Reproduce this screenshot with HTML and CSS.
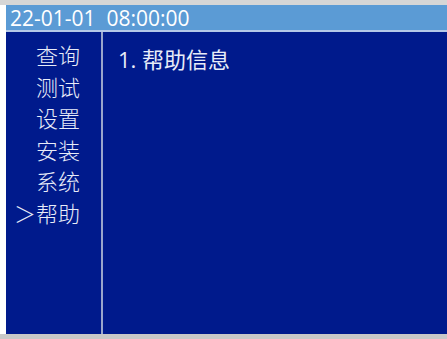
FILE: index.html
```html
<!DOCTYPE html>
<html lang="zh-CN">
<head>
  <meta charset="UTF-8">
  <meta name="viewport" content="width=device-width, initial-scale=1.0">
  <title>帮助</title>
  <link rel="stylesheet" href="styles.css">
</head>
<body>

  <div class="screen">
    <!-- 顶部时间栏 -->
    <div class="status-bar">22-01-01&nbsp;&nbsp;08:00:00</div>

    <div class="main">
      <!-- 左侧菜单 -->
      <ul class="menu">
        <li><span class="cursor"></span>查询</li>
        <li><span class="cursor"></span>测试</li>
        <li><span class="cursor"></span>设置</li>
        <li><span class="cursor"></span>安装</li>
        <li><span class="cursor"></span>系统</li>
        <li class="active"><span class="cursor">＞</span>帮助</li>
      </ul>

      <!-- 右侧内容 -->
      <div class="content">
        <p>1. 帮助信息</p>
      </div>
    </div>
  </div>

</body>
</html>
```

FILE: styles.css
```css
* {
  margin: 0;
  padding: 0;
  box-sizing: border-box;
}

body {
  background-color: #ffffff;
  font-family: "Open Sans", "Noto Sans CJK SC", sans-serif;
  width: 447px;
  height: 339px;
  overflow: hidden;
}

.screen {
  height: 339px;
  padding-left: 6px;
  border-top: 5px solid #d6d6d6;
  border-bottom: 5px solid #c8c8c8;
  display: flex;
  flex-direction: column;
}

.status-bar {
  height: 27px;
  background-color: #5b9bd5;
  color: #ffffff;
  font-size: 21px;
  line-height: 27px;
  padding-left: 4px;
  border-bottom: 2px solid #b4c8e8;
}

.main {
  flex: 1;
  display: flex;
  background-color: #001a8c;
}

.menu {
  list-style: none;
  width: 97px;
  border-right: 2px solid #9aa6cc;
  padding-top: 7px;
  font-family: "Noto Sans CJK SC", sans-serif;
  font-weight: 300;
  font-size: 22px;
  color: #e8ecf8;
}

.menu li {
  display: flex;
  height: 31.5px;
  line-height: 31.5px;
  padding-left: 8px;
}

.cursor {
  width: 22px;
  text-align: center;
}

.content {
  flex: 1;
  padding: 10px 0 0 15px;
  font-family: "Open Sans", "Noto Sans CJK SC", sans-serif;
  font-size: 22px;
  color: #e8ecf8;
}
```
